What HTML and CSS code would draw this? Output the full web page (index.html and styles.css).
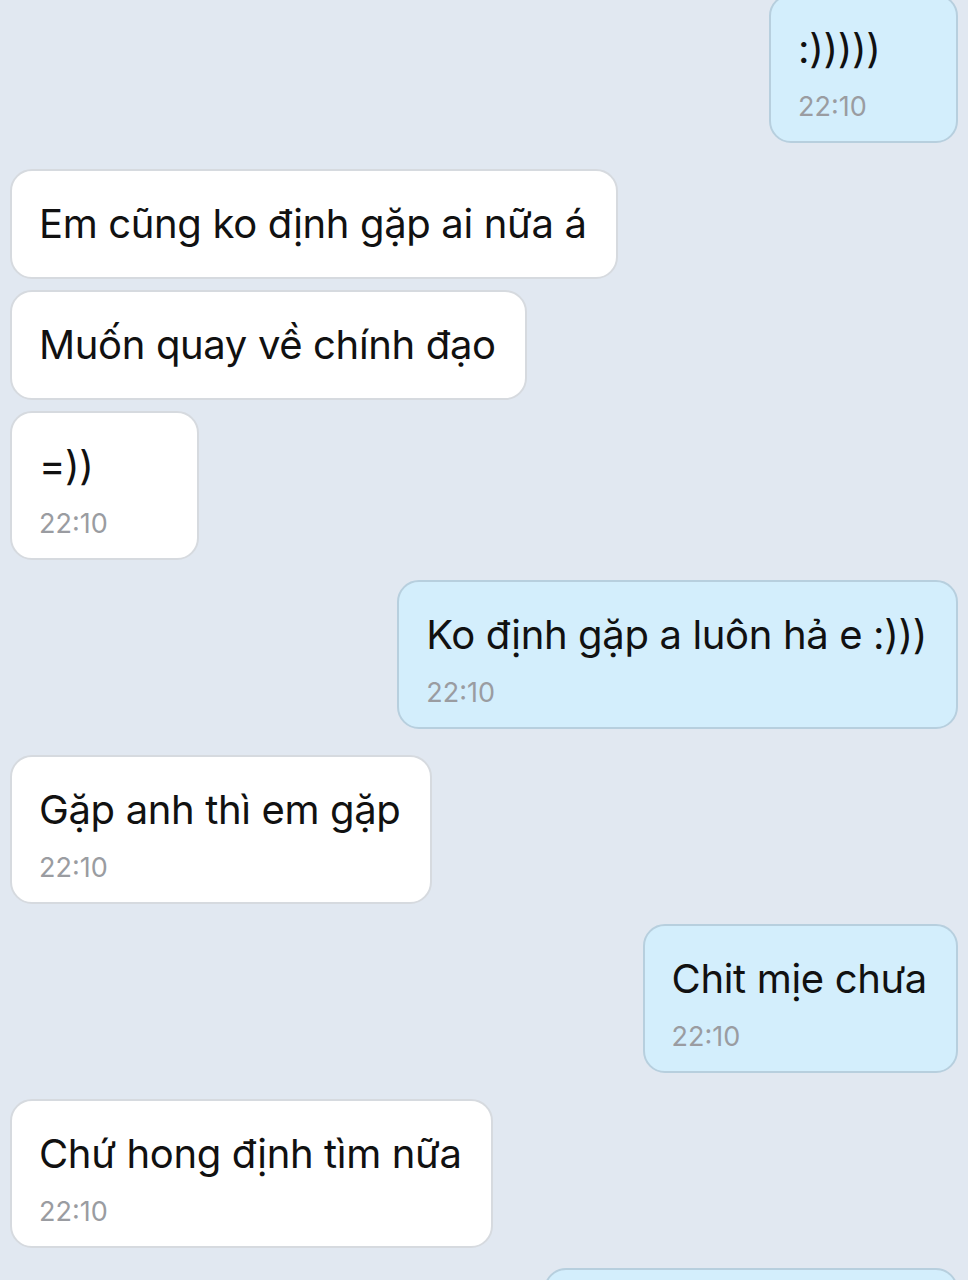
FILE: index.html
```html
<!DOCTYPE html>
<html lang="vi">
<head>
<meta charset="utf-8">
<link rel="stylesheet" href="styles.css">
</head>
<body>
<div class="chat">
  <div class="row sent first">
    <div class="bubble out">
      <div class="msg">:)))))</div>
      <div class="time">22:10</div>
    </div>
  </div>
  <div class="row recv gap-l">
    <div class="bubble in single">
      <div class="msg">Em cũng ko định gặp ai nữa á</div>
    </div>
  </div>
  <div class="row recv gap-s">
    <div class="bubble in single">
      <div class="msg">Muốn quay về chính đạo</div>
    </div>
  </div>
  <div class="row recv gap-s">
    <div class="bubble in">
      <div class="msg">=))</div>
      <div class="time">22:10</div>
    </div>
  </div>
  <div class="row sent gap-m">
    <div class="bubble out">
      <div class="msg">Ko định gặp a luôn hả e :)))</div>
      <div class="time">22:10</div>
    </div>
  </div>
  <div class="row recv gap-l">
    <div class="bubble in">
      <div class="msg">Gặp anh thì em gặp</div>
      <div class="time">22:10</div>
    </div>
  </div>
  <div class="row sent gap-m">
    <div class="bubble out">
      <div class="msg">Chit mịe chưa</div>
      <div class="time">22:10</div>
    </div>
  </div>
  <div class="row recv gap-l">
    <div class="bubble in">
      <div class="msg">Chứ hong định tìm nữa</div>
      <div class="time">22:10</div>
    </div>
  </div>
  <div class="row sent gap-m">
    <div class="bubble out partial"></div>
  </div>
</div>
</body>
</html>
```

FILE: styles.css
```css
html, body {
  margin: 0;
  padding: 0;
  background: #e1e8f1;
}
body {
  font-family: Inter, "Noto Sans", "Liberation Sans", sans-serif;
  color: #111;
  overflow: hidden;
  height: 1280px;
}
.chat {
  display: flex;
  flex-direction: column;
  padding: 0 10px;
}
.row {
  display: flex;
}
.row.sent { justify-content: flex-end; }
.row.recv { justify-content: flex-start; }
.row.first { margin-top: -6px; }
.gap-s { margin-top: 11px; }
.gap-m { margin-top: 20px; }
.gap-l { margin-top: 26px; }

.bubble {
  box-sizing: border-box;
  min-width: 189px;
  border-radius: 22px;
  padding: 30px 29px 19px 27px;
  border: 2px solid transparent;
}
.bubble.in {
  background: #ffffff;
  border-color: #d6dadf;
}
.bubble.out {
  background: #d3eefc;
  border-color: #b7cfde;
}
.bubble.single {
  padding-bottom: 30px;
}
.msg {
  font-size: 40px;
  line-height: 46px;
  letter-spacing: -0.35px;
  white-space: nowrap;
}
.time {
  font-size: 27px;
  line-height: 30px;
  color: #9a9ca1;
  margin-top: 20px;
}
.bubble.partial {
  width: 414px;
  height: 120px;
}
```
